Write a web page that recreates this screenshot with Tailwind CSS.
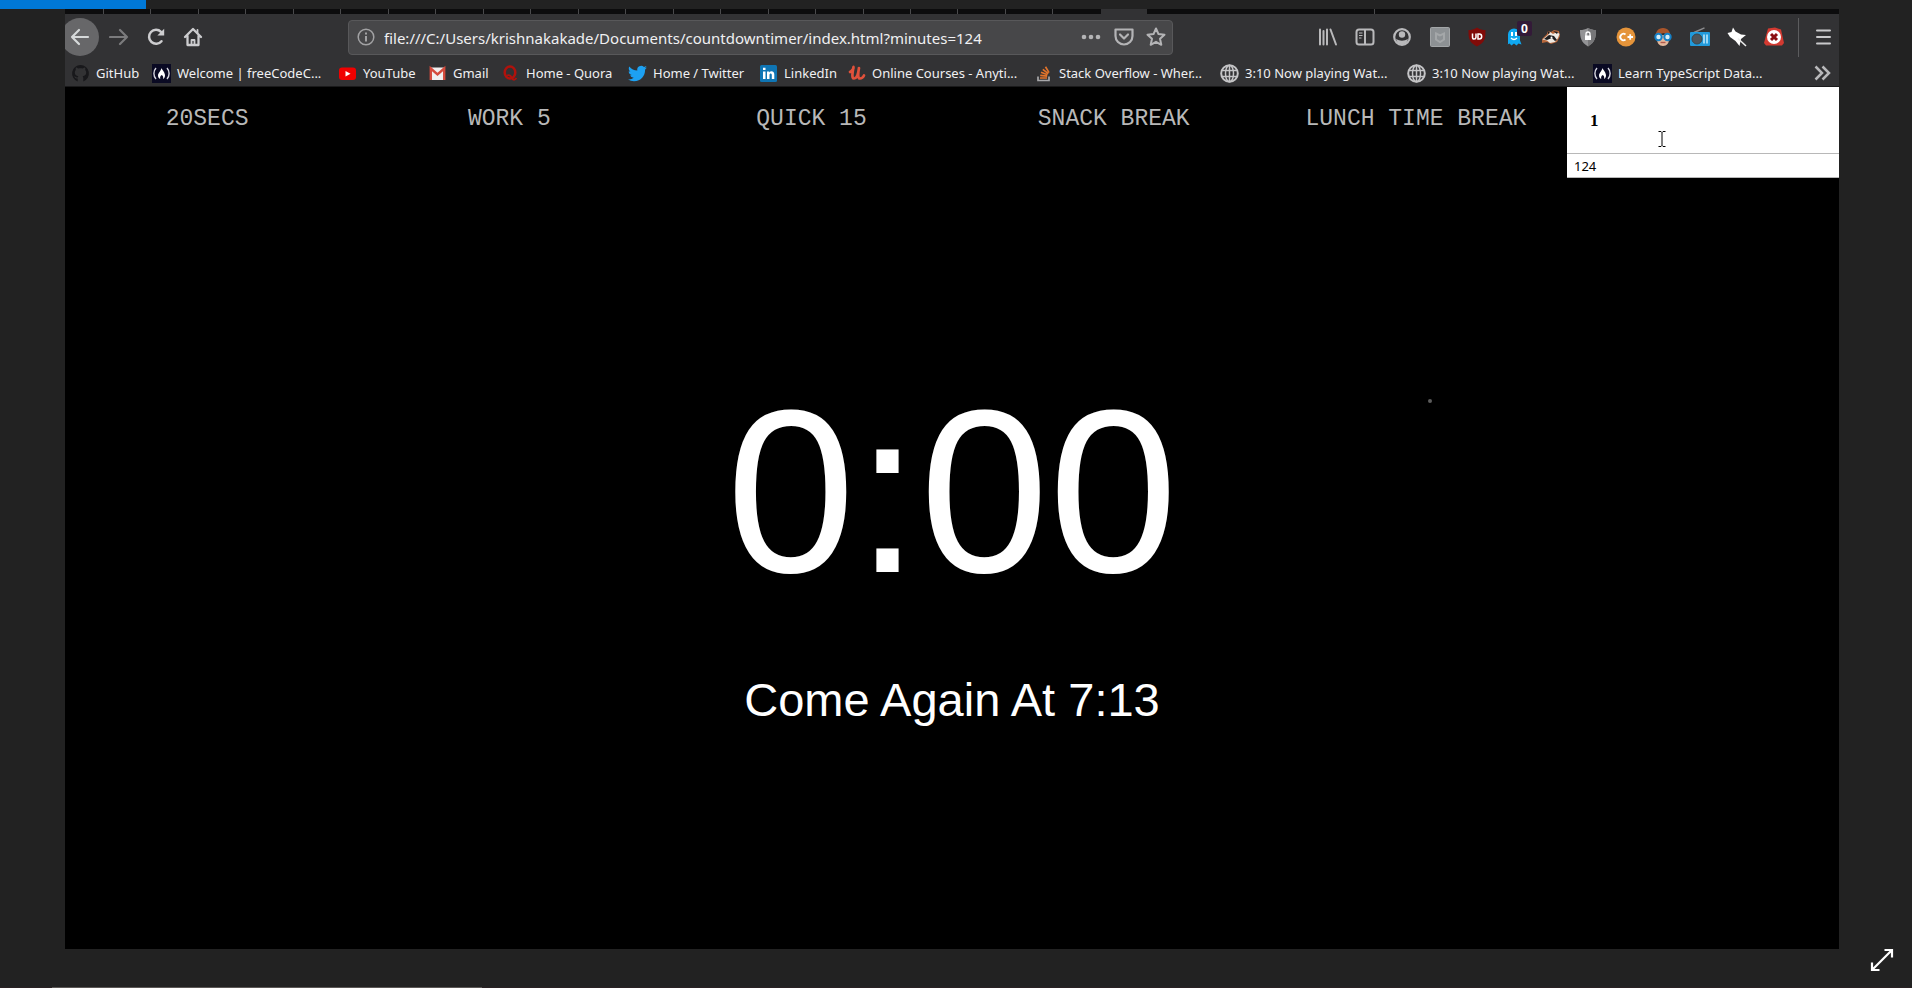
<!DOCTYPE html>
<html lang="en">
<head>
<meta charset="utf-8">
<title>Countdown timer</title>
<script src="https://cdn.jsdelivr.net/npm/@tailwindcss/browser@4"></script>
</head>
<body class="bg-[#222222]">
<svg class="hidden">
  <symbol id="fcc" viewBox="0 0 19 19"><path fill="#0a0a23" d="M0 0h19v19H0z"/><path d="M4 4C1.200 7 1.200 12 4 15M15 4c2.800 3 2.800 8 0 11" stroke="#d8d8e0" stroke-width="1.400" fill="none"/><path d="M9.500 4c.5 2 3.500 4 3.500 7.500 0 2-1 3-2 3.500.5-1.500.2-3-1.300-4-1.500 1-1.900 2.500-1.400 4C7 14.500 6 13.500 6 11.500 6 9 9 7 9.500 4z" fill="#fff"/></symbol>
  <symbol id="globe" viewBox="0 0 19 19"><g fill="none" stroke="#c4c4c6" stroke-width="1.500"><circle cx="9.500" cy="9.500" r="8.300" stroke-width="2"/><ellipse cx="9.500" cy="9.500" rx="4" ry="8.300"/><path d="M2 6.500h15M2 12.500h15M9.500 1v17"/></g></symbol>
</svg>
<div class="relative flex min-h-screen flex-col px-[73px] pb-[39px] pl-[65px]">
  <div class="-ml-[65px] h-[9px] w-[146px] bg-[#0078d7]"></div>

  <div class="flex flex-1 flex-col overflow-hidden bg-black">
    <!-- Tab strip -->
    <div class="flex h-[5px] bg-[#0c0c0d]">
      <div class="w-[39px] border-r border-[#4a4a4c]"></div>
      <div class="grid flex-[998] grid-cols-21 divide-x divide-[#4a4a4c]">
        <i></i><i></i><i></i><i></i><i></i><i></i><i></i><i></i><i></i><i></i><i></i><i></i><i></i><i></i><i></i><i></i><i></i><i></i><i></i><i></i><i></i>
      </div>
      <div class="flex-[46] bg-[#323234]"></div>
      <div class="flex-[227] border-r border-[#4a4a4c]"></div>
      <div class="flex-[227] border-r border-[#4a4a4c]"></div>
      <div class="flex-[237]"></div>
    </div>

    <!-- Toolbar -->
    <header class="border-b border-[#1a1a1b] bg-[#323234] font-['Noto_Sans',sans-serif] text-[#f0f0f2]">
      <div class="flex h-[46px] items-center">
        <button aria-label="Back" class="-ml-1 grid size-[38px] shrink-0 place-items-center rounded-full bg-[#676769]">
          <svg class="size-5" viewBox="0 0 20 20" fill="none" stroke="#d6d9da" stroke-width="2.200" stroke-linecap="round" stroke-linejoin="round"><path d="M18 10H2M9 3l-7 7 7 7"/></svg>
        </button>
        <button aria-label="Forward" class="ml-[10px]">
          <svg class="size-5" viewBox="0 0 20 20" fill="none" stroke="#7b7b7d" stroke-width="2.200" stroke-linecap="round" stroke-linejoin="round"><path d="M1 10h17M11 3l7 7-7 7"/></svg>
        </button>
        <button aria-label="Reload" class="ml-[17px]">
          <svg class="size-5" viewBox="0 0 20 20" fill="none" stroke="#cdcdcf" stroke-width="2.500" stroke-linecap="round"><path d="M15.500 14.200A7 7 0 1 1 15 4.800"/><path d="M18.200 1.800v6.800h-6.800z" fill="#cdcdcf" stroke="none"/></svg>
        </button>
        <button aria-label="Home" class="ml-[17px]">
          <svg class="size-5" viewBox="0 0 20 20" fill="none" stroke="#cdcdcf" stroke-width="2.300" stroke-linecap="round" stroke-linejoin="round"><path d="M2 10l8-8 8 8M4.500 9v9h11V9"/><path d="M8.500 18v-5h3v5M14.500 3v3" stroke-width="1.800"/></svg>
        </button>
        <div class="ml-[145px] flex h-[35px] flex-[810] items-center rounded-sm border border-[#58585a] bg-[#474749] pl-2 pr-[6px]">
          <svg class="size-[18px]" viewBox="0 0 18 18" fill="none" stroke="#a2a2a4" stroke-width="1.500"><circle cx="9" cy="9" r="7.800"/><path d="M9 8v5.500M9 4.500v2" stroke-width="2"/></svg>
          <input aria-label="Address" class="ml-[9px] min-w-0 flex-1 bg-transparent pt-[2px] text-[15px] leading-6 outline-none" value="file:///C:/Users/krishnakakade/Documents/countdowntimer/index.html?minutes=124">
          <button aria-label="Page actions"><svg class="size-5" viewBox="0 0 20 20" fill="#b4b4b6"><circle cx="3" cy="10" r="2.300"/><circle cx="10" cy="10" r="2.300"/><circle cx="17" cy="10" r="2.300"/></svg></button>
          <button aria-label="Save to Pocket" class="ml-[13px]"><svg class="size-5" viewBox="0 0 20 20" fill="none" stroke="#b4b4b6" stroke-width="2.200" stroke-linejoin="round" stroke-linecap="round"><path d="M1.500 2.500h17V9a8.500 8.500 0 0 1-17 0zM6 7.500l4 4 4-4"/></svg></button>
          <button aria-label="Bookmark this page" class="ml-[12px]"><svg class="size-5" viewBox="0 0 20 20" fill="none" stroke="#b4b4b6" stroke-width="2" stroke-linejoin="round"><path d="M10 1.500l2.500 5.600 6 .6-4.500 4.100 1.300 6L10 14.800l-5.300 3 1.300-6L1.500 7.700l6-.6z"/></svg></button>
        </div>
        <div class="ml-[136px] grid flex-[484] grid-cols-13 justify-items-center">
          <button aria-label="Library"><svg class="size-5" viewBox="0 0 20 20" stroke="#b9b9bb" stroke-width="2" stroke-linecap="round"><path d="M2 2.500v15M5.500 4v13.500M9 2.500v15M12.500 2.500L18 17.500" /></svg></button>
          <button aria-label="Sidebars"><svg class="size-5" viewBox="0 0 20 20" fill="none" stroke="#b9b9bb" stroke-width="2"><rect x="1.500" y="2.500" width="17" height="15" rx="2.500"/><path d="M10 3v14"/><path d="M4 6h3.500M4 8.500h3.500M4 11h2.500" stroke-width="1.200"/></svg></button>
          <button aria-label="Account"><svg class="size-5" viewBox="0 0 20 20"><circle cx="10" cy="10" r="7.800" fill="none" stroke="#b9b9bb" stroke-width="2.200"/><circle cx="10" cy="7.500" r="3.200" fill="#b9b9bb"/><path d="M4 12q6 3.500 12 0-1 5-6 5.500Q5 17 4 12z" fill="#b9b9bb"/></svg></button>
          <button aria-label="McAfee"><svg class="size-5" viewBox="0 0 20 20"><rect x=".5" y=".5" width="19" height="19" rx="1" fill="#8d9194" stroke="#a3a6a8"/><path d="M6 6.500l4 2 4-2v6l-4 2.500-4-2.500z" fill="none" stroke="#a4a7a9" stroke-width="2"/></svg></button>
          <button aria-label="uBlock Origin"><svg class="size-5" viewBox="0 0 20 20"><path d="M10 .5c3 2 5.500 2.500 8.500 2.500 0 8 0 12-8.500 16.500C1.500 15 1.500 11 1.500 3 4.500 3 7 2.500 10 .5z" fill="#800b08"/><path d="M5.500 6.500v3.700q0 1.800 1.700 1.800T9 10.200V6.500" stroke="#fff" stroke-width="1.500" fill="none"/><path d="M11 7v5h1.200q2.500 0 2.500-2.500T12.200 7z" stroke="#fff" stroke-width="1.500" fill="none"/></svg></button>
          <button aria-label="Ghostery" class="relative"><svg class="size-5" viewBox="0 0 20 20"><path d="M4 17.500V7.500a6 6 0 0 1 12 0v6l1.500 4-3-1-2 2-2.500-2-2.500 2-2-2-3 1.500z" fill="#0fa8f0"/><path d="M8 5v4M12 5v4" stroke="#fff" stroke-width="2"/><path d="M7 11q3 3 6 0" stroke="#fff" stroke-width="1.300" fill="none"/></svg><span class="absolute -top-[6px] left-[13px] grid h-[15px] w-[15px] place-items-center rounded-xs bg-[#331a38] text-[12px] leading-none font-bold text-white">0</span></button>
          <button aria-label="Privacy Badger"><svg class="size-5" viewBox="0 0 20 20"><path d="M1 12l5-5 1-3 3 1 3-2 5 1 1 5-3 6-6 2-4-2-5 1z" fill="#b8683c"/><path d="M1.500 12.500L7 8l2-3 3 2 4-2 2.500 2-1.500 4-3 4-5 1-3-2.500z" fill="#eee9e2"/><path d="M3 12l5-4 5 1 3 4-2 1-3-3-5 2zM12 4l5 1-1 2zM7 4l2 2-2 1z" fill="#1e1d1e"/><circle cx="10.500" cy="10.500" r="1" fill="#fff"/></svg></button>
          <button aria-label="HTTPS shield"><svg class="size-5" viewBox="0 0 20 20"><path d="M10 1c3 1.500 5 2 8 2 0 8-1 12-8 16.500C3 15 2 11 2 3c3 0 5-.5 8-2z" fill="#939395"/><path d="M10 1c3 1.500 5 2 8 2 0 8-1 12-8 16.500z" fill="#777779"/><path d="M7 8.500h6v4.500H7z" fill="#fff"/><path d="M8 9V7a2 2 0 0 1 4 0v2" fill="none" stroke="#fff" stroke-width="1.300"/></svg></button>
          <button aria-label="C plus"><svg class="size-5" viewBox="0 0 20 20"><circle cx="10" cy="10" r="9.500" fill="#e5943a"/><path d="M9.500 7.500a3.200 3.200 0 1 0 0 5M11.500 10h5.500M14.200 7.300v5.400" fill="none" stroke="#fff" stroke-width="1.800"/></svg></button>
          <button aria-label="Reader"><svg class="size-5" viewBox="0 0 20 20"><path d="M10 19c-4 0-6-3-6-7h12c0 4-2 7-6 7z" fill="#e4b79b"/><path d="M2.500 11C2 5 5 1 10 1s8 4 7.500 10l-2-3-5-2-6 2z" fill="#a9552b"/><path d="M3.500 8h13v4h-13z" fill="#e4b79b"/><g fill="#d7edf8" stroke="#1580c6" stroke-width="2"><circle cx="5.500" cy="10" r="3.200"/><circle cx="14.500" cy="10" r="3.200"/></g><path d="M7.500 15.500h5" stroke="#b1594c" stroke-width="1.400"/></svg></button>
          <button aria-label="Radio"><svg class="size-5" viewBox="0 0 20 20"><path d="M4 5.500L14.500.8" stroke="#8b8b8d" stroke-width="1.400"/><rect y="5" width="20" height="14" rx="1" fill="#219adb"/><circle cx="7" cy="12" r="5" fill="#4f565b" stroke="#39474f"/><path d="M14 7.500v9M17 7.500v9" stroke="#a9dcf5" stroke-width="1.800"/></svg></button>
          <button aria-label="Pin"><svg class="size-5" viewBox="0 0 20 20"><path d="M6 .5l2.500 4 5.500 3 5 .5-5 4-1.500 7-4-5L3 10 .5 6 4.500 5z" fill="#fff"/><path d="M11 11.500l8 7.500" stroke="#eee" stroke-width="1.500"/></svg></button>
          <button aria-label="Stop"><svg class="size-5" viewBox="0 0 20 20"><path d="M4 1.500L11 .5l6 2 3 13.500-2 2.500H2L0 16z" fill="#d43a31"/><circle cx="10" cy="10" r="7" fill="#fff"/><path d="M7 7l6 6M13 7l-6 6" stroke="#8c1013" stroke-width="3"/></svg></button>
        </div>
        <div class="ml-[5px] h-[39px] w-px bg-[#5c5c5e]"></div>
        <button aria-label="Menu" class="mr-[6px] ml-[14px]"><svg class="size-5" viewBox="0 0 20 20" stroke="#c9c9cb" stroke-width="2" stroke-linecap="round"><path d="M4 3.500h13M4 10h13M4 16.500h13"/></svg></button>
      </div>

      <!-- Bookmarks -->
      <nav aria-label="Bookmarks" class="flex h-[26px] items-center pr-[6px] pl-[6px] text-[13px] leading-6">
        <div class="grid flex-1 grid-cols-[81fr_186fr_90fr_73fr_127fr_131fr_88fr_187fr_186fr_187fr_186fr_220fr] whitespace-nowrap [&>a]:flex [&>a]:min-w-0 [&>a]:items-center [&>a]:gap-[6px] [&_svg]:size-[19px] [&_svg]:shrink-0">
          <a href="#"><svg viewBox="0 0 19 19"><path d="M9.500 1a8.500 8.500 0 0 0-2.800 16.500v-3C4 15 4 13 3 12.500c2-.5 2 1.500 3.800 1 .1-.6.3-1 .6-1.300C5 12 3.800 10.800 3.800 8.300c0-1 .4-1.800 1-2.400-.2-.6-.2-1.500.1-2.300 1 0 1.700.5 2.400 1 1.400-.4 3-.4 4.400 0 .7-.5 1.500-1 2.400-1 .3.800.3 1.700.1 2.300.6.600 1 1.400 1 2.400 0 2.500-1.200 3.700-3.600 4 .4.400.7 1 .7 2v3.200A8.500 8.500 0 0 0 9.500 1z" fill="#18181b"/></svg>GitHub</a>
          <a href="#"><svg><use href="#fcc"/></svg>Welcome | freeCodeC...</a>
          <a href="#"><svg viewBox="0 0 19 19"><rect x="1" y="3.500" width="17" height="12.500" rx="3" fill="#f00000"/><path d="M7.500 7l5 2.700-5 2.800z" fill="#fff"/></svg>YouTube</a>
          <a href="#"><svg viewBox="0 0 19 19"><path d="M2 3.500h15V16H2z" fill="#f1efef"/><path d="M2.800 16V4.500l6.700 6 6.700-6V16" fill="none" stroke="#d54b3d" stroke-width="2.400"/></svg>Gmail</a>
          <a href="#"><svg viewBox="0 0 19 19"><ellipse cx="9" cy="8.500" rx="5.300" ry="6" fill="none" stroke="#b0120c" stroke-width="2.500"/><path d="M6 11.500q3-1.500 5 2.500 1.800 3.500 4.500 0" fill="none" stroke="#b0120c" stroke-width="1.800"/></svg>Home - Quora</a>
          <a href="#"><svg viewBox="0 0 24 24"><path fill="#1da1f2" d="M23.950 4.570a10 10 0 0 1-2.820.77 4.960 4.960 0 0 0 2.160-2.720c-.95.55-2 .95-3.120 1.180a4.920 4.920 0 0 0-8.380 4.480A13.900 13.900 0 0 1 1.640 3.160a4.820 4.820 0 0 0-.67 2.480c0 1.710.87 3.210 2.190 4.100a4.900 4.900 0 0 1-2.230-.62v.06a4.920 4.920 0 0 0 3.950 4.830 5 5 0 0 1-2.210.08 4.940 4.940 0 0 0 4.600 3.420A9.870 9.870 0 0 1 0 19.540a14 14 0 0 0 7.550 2.210c9.050 0 14-7.500 14-13.980 0-.21 0-.42-.02-.63a9.900 9.900 0 0 0 2.420-2.570z"/></svg>Home / Twitter</a>
          <a href="#"><svg viewBox="0 0 19 19"><rect x="1" y="1" width="17" height="17" rx="1.500" fill="#0f75b4"/><path d="M4 7.500h2.500V15H4zM4 3.700h2.500V6H4zM8 7.500h2.300v1c1.400-2 5-1.500 5 2V15h-2.500v-4c0-2-2.300-2-2.300 0v4H8z" fill="#fff"/></svg>LinkedIn</a>
          <a href="#"><svg viewBox="0 0 19 19"><path d="M3 8c2-1 4-4 3.500-5C6 6 4 14.500 7 14.500S11.500 8 12 4c-1 5-1.500 10.500 1 10.500 2 0 3-1 4-3" fill="none" stroke="#e1513b" stroke-width="2.700" stroke-linecap="round" stroke-linejoin="round"/></svg>Online Courses - Anyti...</a>
          <a href="#"><svg viewBox="0 0 19 19" fill="none"><path d="M4 12.500v4h11v-4" stroke="#a8a8aa" stroke-width="1.700"/><path d="M6 14h7M6.200 11.300l7 .9M7 8.300l6.500 2.500M8.800 5.300l5.500 4.400M11.500 2.800l3.500 5.800" stroke="#e2742b" stroke-width="1.700"/></svg>Stack Overflow - Wher...</a>
          <a href="#"><svg><use href="#globe"/></svg>3:10 Now playing Wat...</a>
          <a href="#"><svg><use href="#globe"/></svg>3:10 Now playing Wat...</a>
          <a href="#"><svg><use href="#fcc"/></svg>Learn TypeScript Data...</a>
        </div>
        <button aria-label="More bookmarks"><svg class="size-5" viewBox="0 0 20 20" fill="none" stroke="#b9b9bb" stroke-width="2.500"><path d="M2.500 3.500L9 10l-6.500 6.500M9.500 3.500L16 10l-6.500 6.500"/></svg></button>
      </nav>
    </header>

    <!-- Timer page -->
    <div class="flex items-start">
      <nav aria-label="Timers" class="-ml-[9px] grid flex-[1511] grid-cols-5 justify-items-center pt-[19px] font-['Liberation_Mono',monospace] text-[23px] leading-[26px] text-[#b8b8b8]">
        <button>20SECS</button>
        <button>WORK 5</button>
        <button>QUICK 15</button>
        <button>SNACK BREAK</button>
        <button>LUNCH TIME BREAK</button>
      </nav>
      <form class="relative flex flex-[272] flex-col">
        <input aria-label="Timer" value="1" class="h-[66px] w-full bg-white pt-[2px] pl-[23px] font-['Liberation_Serif',serif] text-[17px] font-bold text-black outline-none">
        <input aria-label="Minutes" value="124" class="h-[25px] w-full border-y border-[#b8b8b8] bg-white pl-[7px] font-['Noto_Sans',sans-serif] text-[13px] text-black outline-none">
        <svg class="absolute top-[44px] left-[91px] h-[16px] w-[8px]" viewBox="0 0 8 16" fill="none" stroke="#000"><path d="M.5.5h2.500l1 1 1-1h2.500M4 1.500v13M.5 15.500h2.500l1-1 1 1h2.500"/></svg>
      </form>
    </div>
    <main class="flex flex-1 flex-col items-center justify-center pb-[28px] font-['Liberation_Sans',sans-serif] text-white">
      <h1 class="text-[232px] leading-none">0:00</h1>
      <p class="mt-[68px] text-[47px] leading-none">Come Again At 7:13</p>
    </main>
  </div>

  <div class="absolute top-[399px] left-[1428px] size-[4px] rounded-full bg-[#5c5c5c]"></div>
  <button aria-label="Full screen" class="absolute right-[18px] bottom-[16px]"><svg class="size-6" viewBox="0 0 24 24" fill="none" stroke="#fff" stroke-width="2.200"><path d="M2 22L22 2M14.500 2H22v7.500M2 14.500V22h7.500"/></svg></button>
  <div class="absolute inset-x-0 bottom-0 h-px bg-[#2a2224]"><div class="ml-[52px] h-px w-[430px] bg-[#5c5856]"></div></div>
</div>
</body>
</html>
